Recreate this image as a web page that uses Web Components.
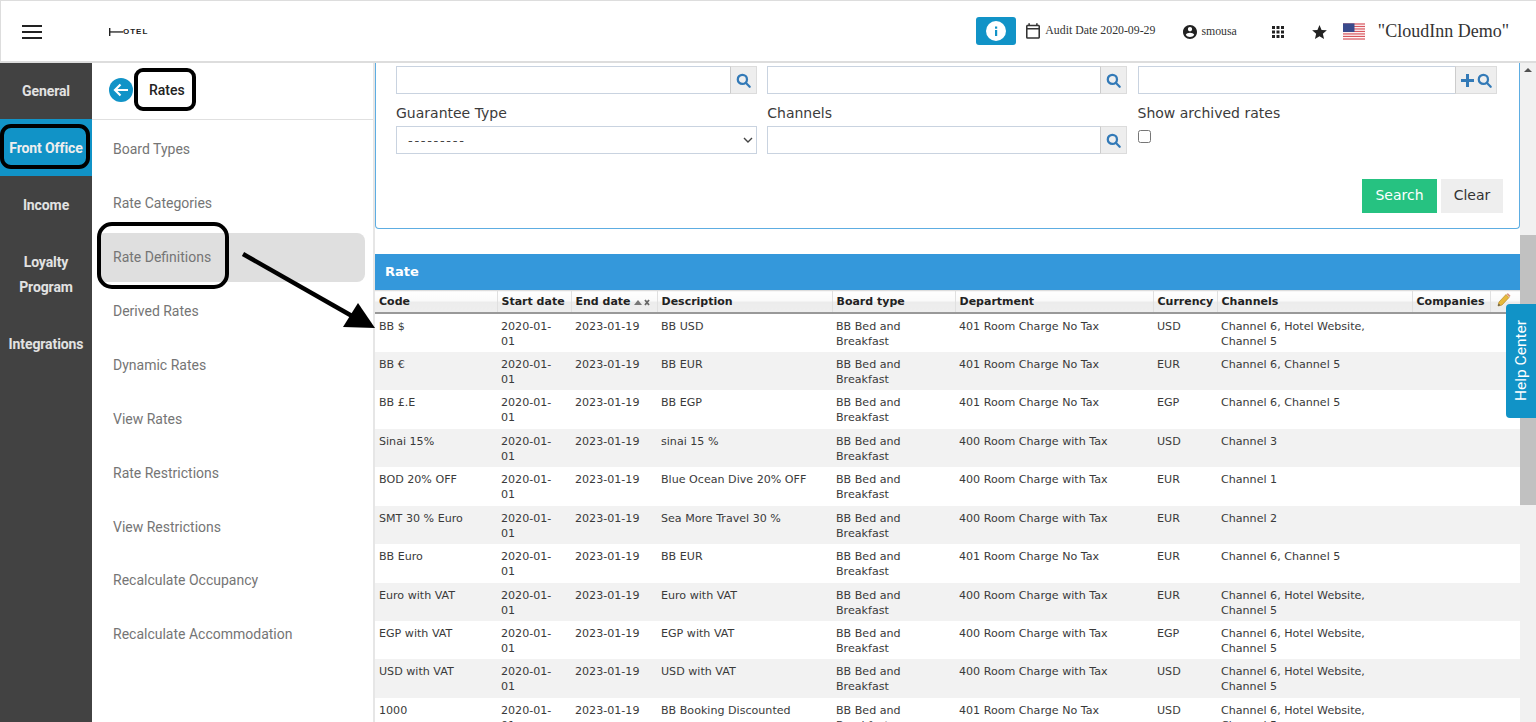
<!DOCTYPE html>
<html lang="en">
<head>
<meta charset="utf-8">
<title>Rates</title>
<style>
  html, body { margin: 0; height: 100%; overflow: hidden; background: #fff; }
  body { display: flex; flex-direction: column; position: relative; height: 722px; }
  .body-row { flex: 1; display: flex; min-height: 0; }
</style>
</head>
<body>
<app-topbar></app-topbar>
<div class="body-row">
  <nav-rail></nav-rail>
  <rate-menu></rate-menu>
  <rate-main></rate-main>
  <fake-scrollbar></fake-scrollbar>
</div>
<help-tab></help-tab>
<note-layer></note-layer>

<script>
const SEARCH_ICON = `<svg width="15" height="15" viewBox="0 0 16 16" fill="none" stroke="#337ab7" stroke-width="2.4"><circle cx="6.8" cy="6.8" r="4.9"/><path d="M10.4 10.4l4.2 4.2" stroke-linecap="round"/></svg>`;

class AppTopbar extends HTMLElement {
  constructor() {
    super();
    this.attachShadow({ mode: 'open' });
    this.shadowRoot.innerHTML = `
      <style>
        :host {
          display: flex;
          align-items: center;
          box-sizing: border-box;
          height: 63px;
          flex: none;
          background: #fff;
          border-style: solid;
          border-color: #ddd;
          border-width: 1px 0 2px 1px;
          font-family: "Liberation Serif", serif;
          color: #333;
        }
        svg { display: block; flex: none; }
        .menu { margin-left: 21px; margin-top: 2px; }
        .logo { display: flex; align-items: center; margin-left: 67px; margin-top: 1px; font: bold 8px/8px "Liberation Sans", sans-serif; letter-spacing: 1px; color: #222; }
        .spacer { flex: 1; }
        .info { width: 40px; height: 28px; border-radius: 3px; background: #1193c7; display: flex; align-items: center; justify-content: center; margin-top: -1px; }
        .cal { margin-left: 10px; margin-top: -1px; }
        .audit { font-size: 11.8px; margin-left: 5px; margin-top: -1px; white-space: nowrap; }
        .acct { margin-left: 28px; margin-top: 1px; }
        .user { font-size: 11.8px; margin-left: 4px; margin-top: 1px; }
        .apps { margin-left: 35px; margin-top: 1px; }
        .star { margin-left: 28px; margin-top: 1px; }
        .flag { margin-left: 16px; }
        .inn { font-size: 18px; margin-left: 13px; margin-right: 27px; white-space: nowrap; }
      </style>
      <svg class="menu" width="20" height="14" viewBox="0 0 20 14" fill="#222"><rect width="20" height="2" y="0"/><rect width="20" height="2" y="6"/><rect width="20" height="2" y="12"/></svg>
      <div class="logo"><svg width="14" height="8" viewBox="0 0 14 8" fill="#222"><rect x="0" y="0" width="1.4" height="8"/><rect x="0" y="3.3" width="14" height="1.3"/></svg><span>OTEL</span></div>
      <div class="spacer"></div>
      <div class="info"><svg width="20" height="20" viewBox="0 0 20 20"><circle cx="10" cy="10" r="10" fill="#fff"/><rect x="9" y="9" width="2.2" height="6" fill="#1193c7"/><rect x="9" y="5.5" width="2.2" height="2.2" fill="#1193c7"/></svg></div>
      <svg class="cal" width="14" height="16" viewBox="3 2 18 20" fill="#333"><path d="M19 4h-1V2h-2v2H8V2H6v2H5c-1.11 0-1.99.9-1.99 2L3 20a2 2 0 0 0 2 2h14c1.1 0 2-.9 2-2V6c0-1.1-.9-2-2-2zm0 16H5V10h14v10zm0-12H5V6h14v2z"/></svg>
      <span class="audit">Audit Date 2020-09-29</span>
      <svg class="acct" width="14" height="14" viewBox="2 2 20 20" fill="#222"><path d="M12 2C6.48 2 2 6.48 2 12s4.48 10 10 10 10-4.48 10-10S17.52 2 12 2zm0 3c1.66 0 3 1.34 3 3s-1.34 3-3 3-3-1.34-3-3 1.34-3 3-3zm0 14.2c-2.5 0-4.71-1.28-6-3.22.03-1.99 4-3.08 6-3.08 1.99 0 5.97 1.09 6 3.08-1.29 1.94-3.5 3.22-6 3.22z"/></svg>
      <span class="user">smousa</span>
      <svg class="apps" width="12" height="12" viewBox="4 4 16 16" fill="#222"><path d="M4 8h4V4H4v4zm6 12h4v-4h-4v4zm-6 0h4v-4H4v4zm0-6h4v-4H4v4zm6 0h4v-4h-4v4zm6-10v4h4V4h-4zm-6 4h4V4h-4v4zm6 6h4v-4h-4v4zm0 6h4v-4h-4v4z"/></svg>
      <svg class="star" width="15" height="14" viewBox="2 2 20 19" fill="#222"><path d="M12 17.27L18.18 21l-1.64-7.03L22 9.24l-7.19-.61L12 2 9.19 8.63 2 9.24l5.46 4.73L5.82 21z"/></svg>
      <svg class="flag" width="22" height="17" viewBox="0 0 23 17">
        <rect width="23" height="17" fill="#fff"/>
        <g fill="#d9575f"><rect width="23" height="1.3" y="0"/><rect width="23" height="1.3" y="2.6"/><rect width="23" height="1.3" y="5.2"/><rect width="23" height="1.3" y="7.8"/><rect width="23" height="1.3" y="10.4"/><rect width="23" height="1.3" y="13"/><rect width="23" height="1.3" y="15.7"/></g>
        <rect width="12" height="9" fill="#3a4a8c"/>
      </svg>
      <span class="inn">"CloudInn Demo"</span>
    `;
  }
}
customElements.define('app-topbar', AppTopbar);

class NavRail extends HTMLElement {
  constructor() {
    super();
    this.attachShadow({ mode: 'open' });
    const items = [['General', 56], ['Front Office', 57, true], ['Income', 57], ['Loyalty<br>Program', 81], ['Integrations', 58]];
    this.shadowRoot.innerHTML = `
      <style>
        :host {
          display: block;
          flex: none;
          width: 92px;
          background: #424242;
          font: bold 14px/25px Roboto, sans-serif;
          color: #e2e2e2;
          text-align: center;
        }
        div { display: flex; align-items: center; justify-content: center; letter-spacing: -.1px; }
        .on { background: #1193c7; color: #eee; }
        .on span, .on ~ div span { margin-top: 2px; }
      </style>
      ${items.map(i => `<div class="${i[2] ? 'on' : ''}" style="height:${i[1]}px"><span>${i[0]}</span></div>`).join('')}
    `;
  }
}
customElements.define('nav-rail', NavRail);

class RateMenu extends HTMLElement {
  constructor() {
    super();
    this.attachShadow({ mode: 'open' });
    const links = ['Board Types', 'Rate Categories', 'Rate Definitions', 'Derived Rates', 'Dynamic Rates', 'View Rates', 'Rate Restrictions', 'View Restrictions', 'Recalculate Occupancy', 'Recalculate Accommodation'];
    this.shadowRoot.innerHTML = `
      <style>
        :host {
          display: block;
          flex: none;
          box-sizing: border-box;
          width: 283px;
          background: #fff;
          border-right: 2px solid #e6e6e6;
          font-family: Roboto, sans-serif;
        }
        .head { display: flex; align-items: center; height: 57px; box-sizing: border-box; padding-left: 17px; border-bottom: 1px solid #e0e0e0; font-weight: 500; font-size: 14px; color: #222; }
        .head span { margin-left: 16px; margin-top: -3px; }
        svg { display: block; margin-top: -3px; }
        ul { list-style: none; margin: 0; padding: 2.4px 8px 0 5px; }
        li { height: 53.9px; display: flex; align-items: center; padding-left: 16px; border-radius: 8px; font-size: 14px; color: #757575; box-sizing: border-box; white-space: nowrap; }
        li.on { background: #dfdfdf; height: 49px; margin: 2.6px 0 2.3px; }
      </style>
      <div class="head">
        <svg width="24" height="24" viewBox="0 0 24 24"><circle cx="12" cy="12" r="12" fill="#1193c7"/><path d="M19 12H6.5M11.5 6.5L6 12l5.5 5.5" fill="none" stroke="#fff" stroke-width="2.2"/></svg>
        <span>Rates</span>
      </div>
      <ul>${links.map(l => `<li class="${l === 'Rate Definitions' ? 'on' : ''}">${l}</li>`).join('')}</ul>
    `;
  }
}
customElements.define('rate-menu', RateMenu);

class InputGroup extends HTMLElement {
  constructor() {
    super();
    this.attachShadow({ mode: 'open' });
    this.shadowRoot.innerHTML = `
      <style>
        :host { display: flex; height: 28px; box-sizing: border-box; }
        input { flex: 1; min-width: 0; box-sizing: border-box; height: 100%; border: 1px solid #c9d3e0; border-right: 0; background: #fff; outline: 0; padding: 0; }
        .add { display: flex; align-items: center; justify-content: center; gap: 3px; box-sizing: border-box; width: var(--addon, 27px); background: #eee; border: 1px solid #dcdcdc; border-left: 1px solid #ccc; }
        svg { display: block; }
      </style>
      <input type="text">
      <div class="add"><slot></slot>${SEARCH_ICON}</div>
    `;
  }
}
customElements.define('input-group', InputGroup);

class SearchFilters extends HTMLElement {
  constructor() {
    super();
    this.attachShadow({ mode: 'open' });
    this.shadowRoot.innerHTML = `
      <style>
        :host {
          display: block;
          box-sizing: border-box;
          height: 166px;
          padding: 3px 22px 0 20px;
          border: 1px solid #5dade2;
          border-top: 0;
          border-radius: 0 0 4px 4px;
          background: #fff;
          font: 14px/20px "DejaVu Sans", sans-serif;
          color: #3b3b3b;
        }
        .grid { display: grid; grid-template-columns: 361px 360px 359.5px; column-gap: 10.25px; }
        label { display: block; margin: 9px 0 3px; height: 20px; font-size: 14px; }
        .pick { position: relative; height: 28px; }
        select { appearance: none; width: 100%; height: 28px; box-sizing: border-box; border: 1px solid #c9d3e0; background: #fff; padding: 0 11px; font: 13px "DejaVu Sans", sans-serif; letter-spacing: 1.7px; color: #444; outline: 0; border-radius: 0; }
        .pick svg { position: absolute; right: 4px; top: 11px; pointer-events: none; }
        .check { display: block; width: 13px; height: 13px; margin: 7px 0 0 0; }
        .btns { display: flex; justify-content: flex-end; gap: 4px; margin: 25px -6px 0 0; }
        button { height: 34px; border: 0; border-radius: 0; font: 14px "DejaVu Sans", sans-serif; padding: 0 0 2px; }
        .go { width: 75px; background: #26c281; color: #fff; }
        .clr { width: 62px; background: #eee; color: #333; }
      </style>
      <div class="grid">
        <input-group></input-group>
        <input-group></input-group>
        <input-group style="--addon:42px"><svg width="13" height="13" viewBox="0 0 13 13" fill="#337ab7" style="display:block"><path d="M5 0h3v5h5v3H8v5H5V8H0V5h5z"/></svg></input-group>
        <div><label>Guarantee Type</label><div class="pick"><select><option>---------</option></select><svg width="10" height="6" viewBox="0 0 10 6" fill="none" stroke="#444" stroke-width="1.4"><path d="M1 1l4 4 4-4"/></svg></div></div>
        <div><label>Channels</label><input-group></input-group></div>
        <div><label>Show archived rates</label><input class="check" type="checkbox"></div>
      </div>
      <div class="btns"><button class="go">Search</button><button class="clr">Clear</button></div>
    `;
  }
}
customElements.define('search-filters', SearchFilters);

class RateTable extends HTMLElement {
  constructor() {
    super();
    this.attachShadow({ mode: 'open' });
    const bed = 'BB Bed and Breakfast';
    const noTax = '401 Room Charge No Tax';
    const withTax = '400 Room Charge with Tax';
    const c65 = 'Channel 6, Channel 5';
    const c6h5 = 'Channel 6, Hotel Website, Channel 5';
    const rows = [
      ['BB $', 'BB USD', noTax, 'USD', c6h5],
      ['BB €', 'BB EUR', noTax, 'EUR', c65],
      ['BB £.E', 'BB EGP', noTax, 'EGP', c65],
      ['Sinai 15%', 'sinai 15 %', withTax, 'USD', 'Channel 3'],
      ['BOD 20% OFF', 'Blue Ocean Dive 20% OFF', withTax, 'EUR', 'Channel 1'],
      ['SMT 30 % Euro', 'Sea More Travel 30 %', withTax, 'EUR', 'Channel 2'],
      ['BB Euro', 'BB EUR', noTax, 'EUR', c65],
      ['Euro with VAT', 'Euro with VAT', withTax, 'EUR', c6h5],
      ['EGP with VAT', 'EGP with VAT', withTax, 'EGP', c6h5],
      ['USD with VAT', 'USD with VAT', withTax, 'USD', c6h5],
      ['1000', 'BB Booking Discounted', noTax, 'USD', c6h5],
    ];
    // row pitch of the original is 38.4px, snapped to whole pixels
    const heights = [39, 38, 39, 38, 39, 38, 39, 38, 38, 39, 38];
    this.shadowRoot.innerHTML = `
      <style>
        :host { display: block; margin-top: 25px; font: 11.1px/15px "DejaVu Sans", sans-serif; color: #3a3a3a; }
        .title { height: 36px; box-sizing: border-box; padding-left: 10px; background: #3498db; color: #fff; font: bold 13px/36px "DejaVu Sans", sans-serif; }
        table { table-layout: fixed; border-collapse: collapse; width: 1145px; }
        th { height: 22px; box-sizing: border-box; padding: 0 0 0 4px; text-align: left; font: bold 11px/15px "DejaVu Sans", sans-serif; color: #222; background: linear-gradient(#fff 0, #fafafa 45%, #ececec 50%, #eee 100%); border-top: 1px solid #ddd; border-left: 1px solid #e0e0e0; border-bottom: 2px solid #999; white-space: nowrap; }
        th:first-child { border-left: 0; }
        td { box-sizing: border-box; padding: 5px 4px 0; vertical-align: top; overflow-wrap: break-word; }
        tr:nth-child(even) td { background: #f2f2f2; }
        th svg { vertical-align: -1px; margin-left: 3px; }
      </style>
      <div class="title">Rate</div>
      <table>
        <colgroup>
          <col style="width:122px"><col style="width:74px"><col style="width:86px"><col style="width:175px"><col style="width:123px"><col style="width:198px"><col style="width:64px"><col style="width:195px"><col style="width:78px"><col style="width:30px">
        </colgroup>
        <thead><tr>
          <th>Code</th><th>Start date</th>
          <th>End date<svg width="16" height="8" viewBox="0 0 16 8" fill="#777"><path d="M0 7l4-5 4 5z"/><path d="M11 2l4 5M15 2l-4 5" stroke="#666" stroke-width="1.8" fill="none"/></svg></th>
          <th>Description</th><th>Board type</th><th>Department</th><th>Currency</th><th>Channels</th><th>Companies</th>
          <th><svg width="14" height="14" viewBox="0 0 14 14" style="margin:0 0 0 2px"><path d="M1 13l1-4 7-7.5 3 3L5 12z" fill="#e8b93c" stroke="#b68a24" stroke-width=".7"/><path d="M9.5 1l3 3 1-1.3-2.6-2.4z" fill="#d98f72"/><path d="M1 13l.6-2.4 1.8 1.7z" fill="#555"/></svg></th>
        </tr></thead>
        <tbody>
          ${rows.map((r, i) => `<tr style="height:${heights[i]}px"><td>${r[0]}</td><td>2020-01-<br>01</td><td>2023-01-19</td><td>${r[1]}</td><td>${bed}</td><td>${r[2]}</td><td>${r[3]}</td><td>${r[4]}</td><td></td><td></td></tr>`).join('')}
        </tbody>
      </table>
    `;
  }
}
customElements.define('rate-table', RateTable);

class RateMain extends HTMLElement {
  constructor() {
    super();
    this.attachShadow({ mode: 'open' });
    this.shadowRoot.innerHTML = `
      <style>
        :host { display: block; flex: 1; min-width: 0; overflow: hidden; background: #fff; }
      </style>
      <search-filters></search-filters>
      <rate-table></rate-table>
    `;
  }
}
customElements.define('rate-main', RateMain);

class FakeScrollbar extends HTMLElement {
  constructor() {
    super();
    this.attachShadow({ mode: 'open' });
    this.shadowRoot.innerHTML = `
      <style>
        :host { display: block; flex: none; width: 16px; background: #f1f1f1; }
        .up { width: 0; height: 0; margin: 5px auto 0; border: 4px solid transparent; border-top: 0; border-bottom: 4px solid #505050; }
        .thumb { height: 270px; margin-top: 163px; background: #c1c1c1; }
      </style>
      <div class="up"></div>
      <div class="thumb"></div>
    `;
  }
}
customElements.define('fake-scrollbar', FakeScrollbar);

class HelpTab extends HTMLElement {
  constructor() {
    super();
    this.attachShadow({ mode: 'open' });
    this.shadowRoot.innerHTML = `
      <style>
        :host {
          position: absolute;
          left: 1506px;
          top: 304px;
          width: 30px;
          height: 114px;
          display: flex;
          align-items: center;
          justify-content: center;
          background: #1193c7;
          border-radius: 4px 0 0 4px;
          color: #fff;
          font: 15.5px Roboto, sans-serif;
        }
        span { writing-mode: vertical-rl; transform: rotate(180deg); white-space: nowrap; }
      </style>
      <span>Help Center</span>
    `;
  }
}
customElements.define('help-tab', HelpTab);

class NoteLayer extends HTMLElement {
  constructor() {
    super();
    this.attachShadow({ mode: 'open' });
    this.shadowRoot.innerHTML = `
      <style>
        :host { position: absolute; inset: 0; pointer-events: none; }
        div { position: absolute; box-sizing: border-box; border: 4px solid #000; }
        svg { position: absolute; left: 0; top: 0; }
      </style>
      <div style="left:0;top:124px;width:90px;height:45px;border-radius:11px"></div>
      <div style="left:134px;top:68px;width:62px;height:43px;border-radius:9px"></div>
      <div style="left:97px;top:222px;width:132px;height:67px;border-radius:15px"></div>
      <svg width="400" height="340" viewBox="0 0 400 340"><path d="M243 254L352 316" stroke="#000" stroke-width="4.5"/><path d="M375 328L343 327L358 303z" fill="#000"/></svg>
    `;
  }
}
customElements.define('note-layer', NoteLayer);
</script>
</body>
</html>
